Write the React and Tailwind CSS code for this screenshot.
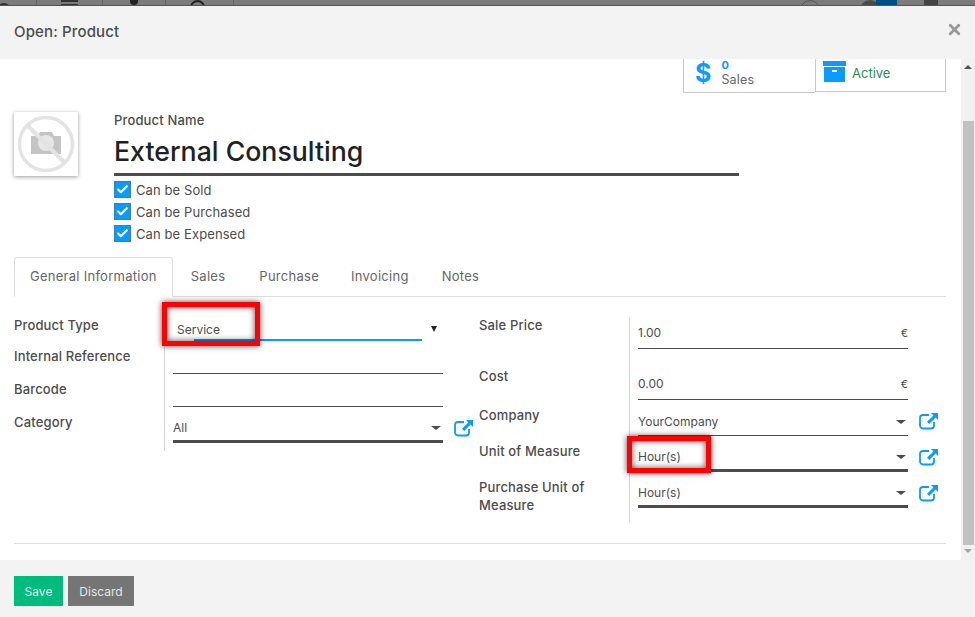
import { Check, X } from 'lucide-react';

const Label = ({ children, className = '' }) => (
    <div className={`text-[13px] leading-[18px] font-medium tracking-[0.15px] text-[#4c4c4c] ${className}`}>{children}</div>
);

const Highlight = ({ className = '' }) => (
    <div className={`absolute border-[5px] border-[#f00] shadow-[0_0_6px_rgba(0,0,0,0.7),inset_0_0_6px_rgba(0,0,0,0.7)] ${className}`} />
);

const OpenLink = () => (
    <svg width="20" height="18" viewBox="0 0 20 18" fill="none" className="shrink-0 mt-[6px] text-[#0b9bff]">
        <path d="M15 10v3.5a3 3 0 0 1-3 3H4a3 3 0 0 1-3-3V6a3 3 0 0 1 3-3h6" stroke="currentColor" strokeWidth="1.8" />
        <path d="M12 1h7v7l-2.4-2.4-6.4 6.4-2.2-2.2 6.4-6.4z" fill="currentColor" />
    </svg>
);

const Arrow = () => <div className="w-0 h-0 mr-[2px] border-x-[5px] border-x-transparent border-t-[4px] border-t-[#4c4c4c]" />;

const Field = ({ value, suffix, arrow, thick, className = '' }) => (
    <div className={`flex items-center justify-between shrink-0 w-[270px] text-[12px] text-[#4c4c4c] border-b-[#4c4c4c] ${thick ? 'border-b-[3px]' : 'border-b'} ${className}`}>
        <span>{value}</span>
        {suffix && <span className="text-[11px]">{suffix}</span>}
        {arrow && <Arrow />}
    </div>
);

const CheckRow = ({ label }) => (
    <div className="flex items-center gap-[5px] h-[22px] text-[13px] tracking-[0.1px] text-[#4c4c4c]">
        <div className="w-[17px] h-[17px] bg-[#0b9bff] border border-[#3a7fb8] flex items-center justify-center -mt-px">
            <Check size={13} strokeWidth={4} className="text-white" />
        </div>
        <span className="pt-px">{label}</span>
    </div>
);

const App = () => {
    return (
        <div className="relative w-[975px] h-[617px] overflow-hidden bg-[#f3f3f3] font-['Inter','Open_Sans',sans-serif]">
            {/* backdrop strip */}
            <div className="relative h-[6px] bg-[#7b7b7b] border-b border-b-[#555] overflow-hidden">
                <div className="absolute left-[-3px] top-[3px] w-[14px] h-[14px] rounded-full bg-[#333]" />
                <div className="absolute left-[36px] top-0 w-px h-[5px] bg-[#666]" />
                <div className="absolute left-[61px] top-0 w-[17px] h-[2px] bg-[#333]" />
                <div className="absolute left-[61px] top-[4px] w-[17px] h-[1px] bg-[#333]" />
                <div className="absolute left-[102px] top-0 w-px h-[5px] bg-[#666]" />
                <div className="absolute left-[130px] -top-[3px] w-[8px] h-[8px] rounded-full bg-[#222]" />
                <div className="absolute left-[165px] top-0 w-px h-[5px] bg-[#666]" />
                <div className="absolute left-[190px] top-0 w-[15px] h-[15px] rounded-full border-2 border-[#222]" />
                <div className="absolute left-[233px] top-0 w-px h-[5px] bg-[#666]" />
                <div className="absolute left-[800px] top-0 w-[20px] h-[20px] rounded-full border border-[#555]" />
                <div className="absolute left-[860px] top-0 w-[20px] h-[20px] rounded-full bg-[#4a4a4a]" />
                <div className="absolute left-[876px] top-0 w-[21px] h-[5px] bg-[#004f86]" />
                <div className="absolute left-[924px] top-0 w-[14px] h-[5px] bg-[#444]" />
            </div>

            {/* header */}
            <div className="flex items-center justify-between h-[53px] pl-[14px] pr-[12px] bg-[#f3f3f3]">
                <div className="text-[15px] font-medium tracking-[0.15px] text-[#4c4c4c]">Open: Product</div>
                <X size={17} strokeWidth={4} className="-mt-[6px] text-[#999]" />
            </div>

            {/* body */}
            <div className="relative flex h-[501px] bg-white">
                <div className="flex-1 min-w-0 pl-[14px] pr-[15px]">
                    {/* stat buttons */}
                    <div className="flex justify-end h-[34px]">
                        <div className="flex items-center gap-[10px] w-[132px] h-[34px] pl-[11px] border border-t-0 border-[#c9c9c9] border-r-0">
                            <div className="text-[25px] leading-none font-bold -mt-[5px] text-[#0b9bff]">$</div>
                            <div className="text-[12.5px] leading-[15px] tracking-[0.2px] text-[#666] -mt-[5px]">
                                <div className="text-[11px] leading-[13px] font-bold text-[#0b9bff]">0</div>
                                <div>Sales</div>
                            </div>
                        </div>
                        <div className="flex items-center gap-[6px] w-[131px] h-[33px] pl-[7px] border border-t-0 border-[#c9c9c9]">
                            <svg width="23" height="22" viewBox="0 0 23 22" className="text-[#0b9bff] -mt-[6px]">
                                <rect x="0" y="0" width="23" height="5" fill="currentColor" />
                                <path d="M1 6h21v15H1z" fill="currentColor" />
                                <rect x="9" y="9" width="5" height="2" fill="#fff" />
                            </svg>
                            <span className="text-[13px] -mt-[3px] text-[#2e8b57]">Active</span>
                        </div>
                    </div>

                    {/* title */}
                    <div className="flex mt-[19px]">
                        <div className="w-[64px] h-[64px] bg-white shadow-[0_1px_4px_rgba(0,0,0,0.4)]">
                            <svg width="64" height="64" viewBox="0 0 64 64">
                                <path d="M17 24h7l2-4h12l2 4h7v18H17z" fill="#c4c4c4" />
                                <circle cx="32" cy="31" r="8" fill="#e6e6e6" />
                                <circle cx="32" cy="32" r="26.5" fill="none" stroke="#e3e3e3" strokeWidth="3.5" />
                                <path d="M13 13l38 38" stroke="#e3e3e3" strokeWidth="4" />
                            </svg>
                        </div>
                        <div className="ml-[36px] w-[625px] -mt-px">
                            <Label>Product Name</Label>
                            <div className="mt-[3px] h-[44px] pt-[1px] border-b-[3px] border-b-[#4c4c4c] text-[26.7px] leading-[36px] font-medium text-[#212121]">External Consulting</div>
                            <div className="mt-[3px]">
                                <CheckRow label="Can be Sold" />
                                <CheckRow label="Can be Purchased" />
                                <CheckRow label="Can be Expensed" />
                            </div>
                        </div>
                    </div>

                    {/* tabs */}
                    <div className="flex mt-[12px] h-[40px] border-b border-b-[#dedede] text-[13px] tracking-[0.27px] text-[#666]">
                        <div className="flex items-center h-[40px] px-[15px] bg-white border border-[#dedede] border-b-white rounded-t-[3px]">General Information</div>
                        <div className="flex items-center h-[39px] ml-[18px]">Sales</div>
                        <div className="flex items-center h-[39px] ml-[34px]">Purchase</div>
                        <div className="flex items-center h-[39px] ml-[32px]">Invoicing</div>
                        <div className="flex items-center h-[39px] ml-[33px]">Notes</div>
                    </div>

                    {/* form */}
                    <div className="flex mt-[20px] h-[227px] border-b border-b-[#dedede]">
                        <div className="flex w-[465px] h-[134px]">
                            <div className="w-[151px] shrink-0 border-r border-r-[#d4d4d4]">
                                <Label className="-mt-px">Product Type</Label>
                                <Label className="mt-[13px]">Internal Reference</Label>
                                <Label className="mt-[15px]">Barcode</Label>
                                <Label className="mt-[15px]">Category</Label>
                            </div>
                            <div className="flex-1 pl-[8px]">
                                <div className="flex items-center justify-between w-[270px] h-[24px] pl-[4px] text-[12px] text-[#4c4c4c]">
                                    <div className="relative h-[24px] pt-[4px]">
                                        Service
                                        <div className="absolute left-[17px] top-[22px] w-[228px] h-[2px] bg-[#0b9bff]" />
                                    </div>
                                    <div className="w-0 h-0 mr-[6px] border-x-[3px] border-x-transparent border-t-[6px] border-t-[#222]" />
                                </div>
                                <Field value="" className="h-[33px]" />
                                <Field value="" className="h-[33px]" />
                                <div className="flex items-center gap-[11px]">
                                    <Field value="All" arrow thick className="h-[36px] pt-[9px]" />
                                    <OpenLink />
                                </div>
                            </div>
                        </div>
                        <div className="flex w-[466px] h-[206px]">
                            <div className="w-[151px] shrink-0 border-r border-r-[#d4d4d4]">
                                <Label className="-mt-px">Sale Price</Label>
                                <Label className="mt-[33px]">Cost</Label>
                                <Label className="mt-[21px]">Company</Label>
                                <Label className="mt-[18px]">Unit of Measure</Label>
                                <Label className="mt-[18px]">Purchase Unit of Measure</Label>
                            </div>
                            <div className="flex-1 pl-[8px]">
                                <Field value="1.00" suffix="€" className="h-[32px] pt-[1px]" />
                                <Field value="0.00" suffix="€" className="h-[51px] pt-[20px]" />
                                <div className="flex items-center gap-[11px]">
                                    <Field value="YourCompany" arrow className="h-[36px] pt-[9px]" />
                                    <OpenLink />
                                </div>
                                <div className="flex items-center gap-[11px]">
                                    <Field value="Hour(s)" arrow thick className="h-[36px] pt-[9px]" />
                                    <OpenLink />
                                </div>
                                <div className="flex items-center gap-[11px]">
                                    <Field value="Hour(s)" arrow thick className="h-[36px] pt-[9px]" />
                                    <OpenLink />
                                </div>
                            </div>
                        </div>
                    </div>
                </div>

                {/* scrollbar */}
                <div className="flex flex-col items-center justify-between w-[14px] shrink-0 bg-[#f1f1f1] pt-[6px] pb-[7px]">
                    <div className="w-0 h-0 border-x-[4px] border-x-transparent border-b-[4px] border-b-[#505050]" />
                    <div className="w-0 h-0 border-x-[4px] border-x-transparent border-t-[4px] border-t-[#a3a3a3]" />
                </div>
                <div className="absolute right-[1px] top-[62px] w-[11px] h-[424px] bg-[#c1c1c1]" />

                {/* red annotation boxes */}
                <Highlight className="left-[162px] top-[243px] w-[98px] h-[44px]" />
                <Highlight className="left-[627px] top-[377px] w-[84px] h-[37px]" />
            </div>

            {/* footer */}
            <div className="flex gap-[5px] pt-[16px] pl-[14px]">
                <button className="w-[49px] h-[30px] pt-px bg-[#00bb7e] text-[12px] text-[#e8f8f2]">Save</button>
                <button className="w-[66px] h-[30px] pt-px bg-[#757575] text-[12px] text-[#e6e6e6]">Discard</button>
            </div>
        </div>
    );
};

export default App;
